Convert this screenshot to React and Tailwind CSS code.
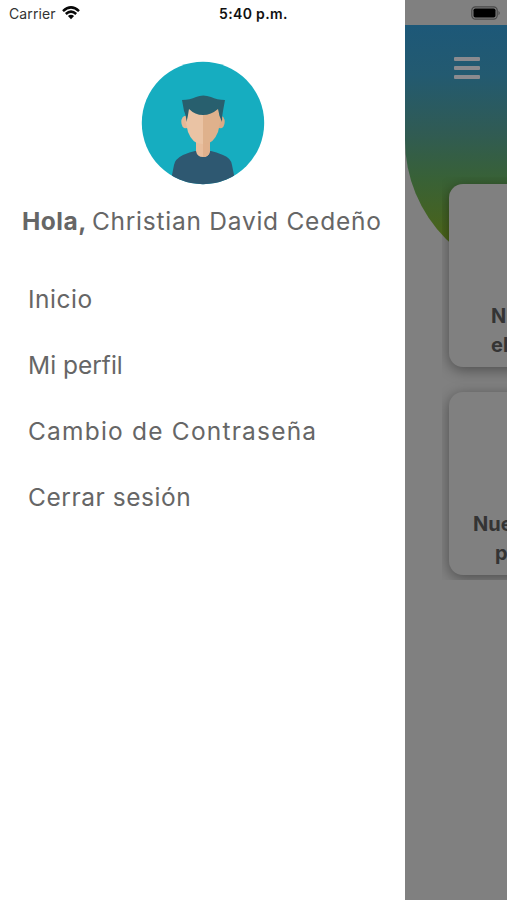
import React from "react";

function Avatar() {
  return (
    <svg className="size-[124px] shrink-0" viewBox="0 0 124 124">
      <defs>
        <clipPath id="disc">
          <circle cx="62" cy="62" r="61.2" />
        </clipPath>
      </defs>
      <g clipPath="url(#disc)">
        <rect width="124" height="124" fill="#16adc0" />
        <path d="M29 124 L33 104 Q34 98 42 94 Q49 91 54 90 H70 Q75 91 82 94 Q90 97 91 104 L95 124Z" fill="#2e5871" />
        <ellipse cx="44.5" cy="61" rx="4.2" ry="6.3" fill="#e5b896" />
        <ellipse cx="79.5" cy="61" rx="4.2" ry="6.3" fill="#dcaa86" />
        <path d="M55 78 H69 V90 Q68 96 62 96 Q56 96 55 90Z" fill="#e8bd9c" />
        <path d="M62 78 H69 V90 Q68 96 62 96Z" fill="#e0b08c" />
        <path d="M44.5 60 L47 44 H62 V83 Q52 84 47 71Z" fill="#eac3a4" />
        <path d="M79.500 60 L77 44 H62 V83 Q72 84 77 71Z" fill="#dfb18c" />
        <path d="M41 39 Q49 39 55 36 Q62 33 70 36 Q76 39 84 39 L82 50 Q81 54 81 61 Q78 55 77 48 Q70 54 62 54 Q54 54 48 48 Q47 55 45.500 61 Q45 54 43 50Z" fill="#285f6e" />
      </g>
    </svg>
  );
}

function Wifi() {
  return (
    <svg className="ml-[6px] h-[14px] w-[18px]" viewBox="0 0 18 14" fill="none" stroke="#080808" strokeWidth="2.5">
      <path d="M1 5.100 Q9 -2.300 17 5.100" />
      <path d="M3.800 8 Q9 3.300 14.200 8" />
      <path d="M5.900 10.100 Q9 7.500 12.100 10.100 L9 13.300Z" fill="#080808" stroke="none" />
    </svg>
  );
}

function Battery() {
  return (
    <svg className="h-[14px] w-[30px]" viewBox="0 0 30 14">
      <rect x="0.800" y="0.800" width="25.400" height="12.400" rx="3.600" fill="none" stroke="#484848" strokeWidth="1.200" />
      <rect x="2.500" y="2.500" width="22" height="9" rx="1.800" fill="#000" />
      <path d="M27.500 4.700 Q30 7 27.500 9.300Z" fill="#484848" />
    </svg>
  );
}

export default function App() {
  return (
    <div className="flex h-[900px] w-[507px] overflow-hidden bg-[#808080] font-['Inter','Liberation_Sans',sans-serif]">
      <aside className="flex w-[405px] shrink-0 flex-col bg-white text-[#666]">
        <div className="flex h-[26px] items-center pl-[9px] text-[#111]">
          <div className="flex w-[210px] items-center">
            <span className="text-[14px] tracking-[0.1px] text-[#333]">Carrier</span>
            <Wifi />
          </div>
          <span className="whitespace-nowrap text-[14px] font-semibold tracking-[0.35px]">5:40 p.m.</span>
        </div>
        <div className="mt-[35px] flex justify-center">
          <Avatar />
        </div>
        <p className="mt-[18px] flex h-9 gap-[5px] whitespace-nowrap pl-[22px] text-[24.5px] leading-9">
          <span className="font-bold tracking-[0.5px]">Hola,</span>
          <span className="tracking-[0.75px]">Christian David Cedeño</span>
        </p>
        <nav className="mt-[27px] flex flex-col whitespace-nowrap pl-[28px] text-[24.5px] leading-[66px]">
          <a className="h-[66px] tracking-[0.5px]">Inicio</a>
          <a className="h-[66px]">Mi perfil</a>
          <a className="h-[66px] tracking-[1.2px]">Cambio de Contraseña</a>
          <a className="h-[66px] tracking-[0.55px]">Cerrar sesión</a>
        </nav>
      </aside>
      <main className="flex min-w-0 flex-1 flex-col overflow-hidden">
        <div className="flex h-[25px] shrink-0 items-center pl-[66px] pt-[1px]">
          <Battery />
        </div>
        <header className="h-[255px] w-[400px] shrink-0 rounded-bl-[140px] bg-[linear-gradient(to_bottom,#1d5878_0%,#235a70_20%,#305b54_42%,#386137_60%,#49631b_82%,#506514_100%)] pl-[49px] pt-[32px]">
          <div className="flex w-[26px] flex-col gap-[5px]">
            <i className="h-[4px] rounded-[1px] bg-[#8b8b8f]" />
            <i className="h-[4px] rounded-[1px] bg-[#8b8b8f]" />
            <i className="h-[4px] rounded-[1px] bg-[#8b8b8f]" />
          </div>
        </header>
        <section className="-mt-[103px] ml-[37px] flex w-[400px] flex-col overflow-hidden pb-[5px] pl-[7px] pt-[7px] text-[20px] font-bold leading-[29px] text-[#343434]">
          <article className="h-[183px] shrink-0 rounded-[14px] bg-[#808080] pl-[42px] pt-[118px] shadow-[0_3px_14px_rgba(0,0,0,0.4)]">
            <p className="whitespace-nowrap">N<br />el</p>
          </article>
          <article className="mt-[25px] h-[183px] shrink-0 rounded-[14px] bg-[#808080] pl-[24px] pt-[118px] shadow-[0_3px_14px_rgba(0,0,0,0.4)]">
            <p className="whitespace-nowrap">Nue<br /><span className="pl-[22px]">p</span></p>
          </article>
        </section>
      </main>
    </div>
  );
}
